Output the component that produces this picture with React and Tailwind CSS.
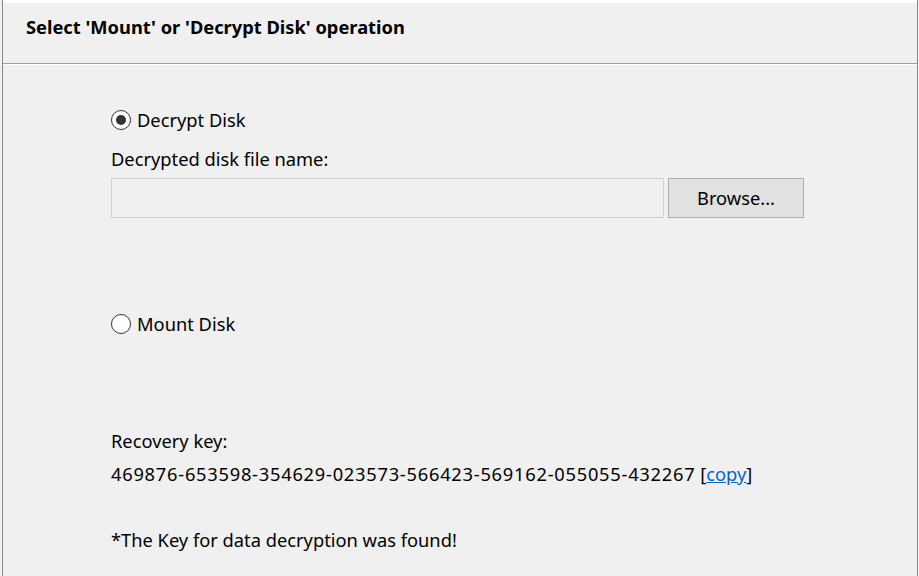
import React from "react";

function Radio({ checked }) {
  return (
    <span className="flex h-[20px] w-[20px] shrink-0 items-center justify-center rounded-full border-[1.5px] border-[#333333] bg-white">
      {checked && <span className="h-[10px] w-[10px] rounded-full bg-[#333333]" />}
    </span>
  );
}

export default function App() {
  return (
    <div
      className="flex h-[576px] w-[919px] flex-col overflow-hidden bg-[#f0f0f0] text-black"
      style={{ fontFamily: '"Noto Sans", "Open Sans", sans-serif' }}
    >
      <div className="flex h-full w-full">
        <div className="w-[2px] bg-[#f0f0f0]" />
        <div className="w-[1px] bg-[#8a8a8a]" />
        <div className="flex flex-1 flex-col">
          <div className="h-[3px] bg-white" />
          <div className="flex h-[60px] items-center pl-[23px] pb-[12px] text-[18.3px] font-bold">
            Select 'Mount' or 'Decrypt Disk' operation
          </div>
          <div className="h-[1px] bg-[#a0a0a0]" />
          <div className="h-[1px] bg-white" />
          <div className="flex flex-1 flex-col pl-[108px] pt-[43px] text-[18.3px]">
            <label className="flex h-[24px] items-center gap-[6px]">
              <Radio checked />
              <span>Decrypt Disk</span>
            </label>
            <div className="mt-[15px] h-[24px] leading-[24px]">Decrypted disk file name:</div>
            <div className="mt-[7px] flex gap-[4px]">
              <div className="h-[40px] w-[553px] border border-[#d0d0d0] bg-[#f0f0f0]" />
              <button className="h-[40px] w-[136px] border border-[#adadad] bg-[#e1e1e1] text-[18.3px]">
                Browse...
              </button>
            </div>
            <label className="mt-[94px] flex h-[24px] items-center gap-[6px]">
              <Radio />
              <span>Mount Disk</span>
            </label>
            <div className="mt-[93px] h-[24px] leading-[24px]">Recovery key:</div>
            <div className="mt-[9px] h-[24px] leading-[24px] whitespace-nowrap">
              <span className="tracking-[0.75px]">469876-653598-354629-023573-566423-569162-055055-432267</span> [
              <a className="text-[#0066cc] underline">copy</a>]
            </div>
            <div className="mt-[42px] h-[24px] leading-[24px]">*The Key for data decryption was found!</div>
          </div>
        </div>
        <div className="w-[1px] bg-[#8a8a8a]" />
        <div className="w-[1px] bg-[#f0f0f0]" />
      </div>
    </div>
  );
}
